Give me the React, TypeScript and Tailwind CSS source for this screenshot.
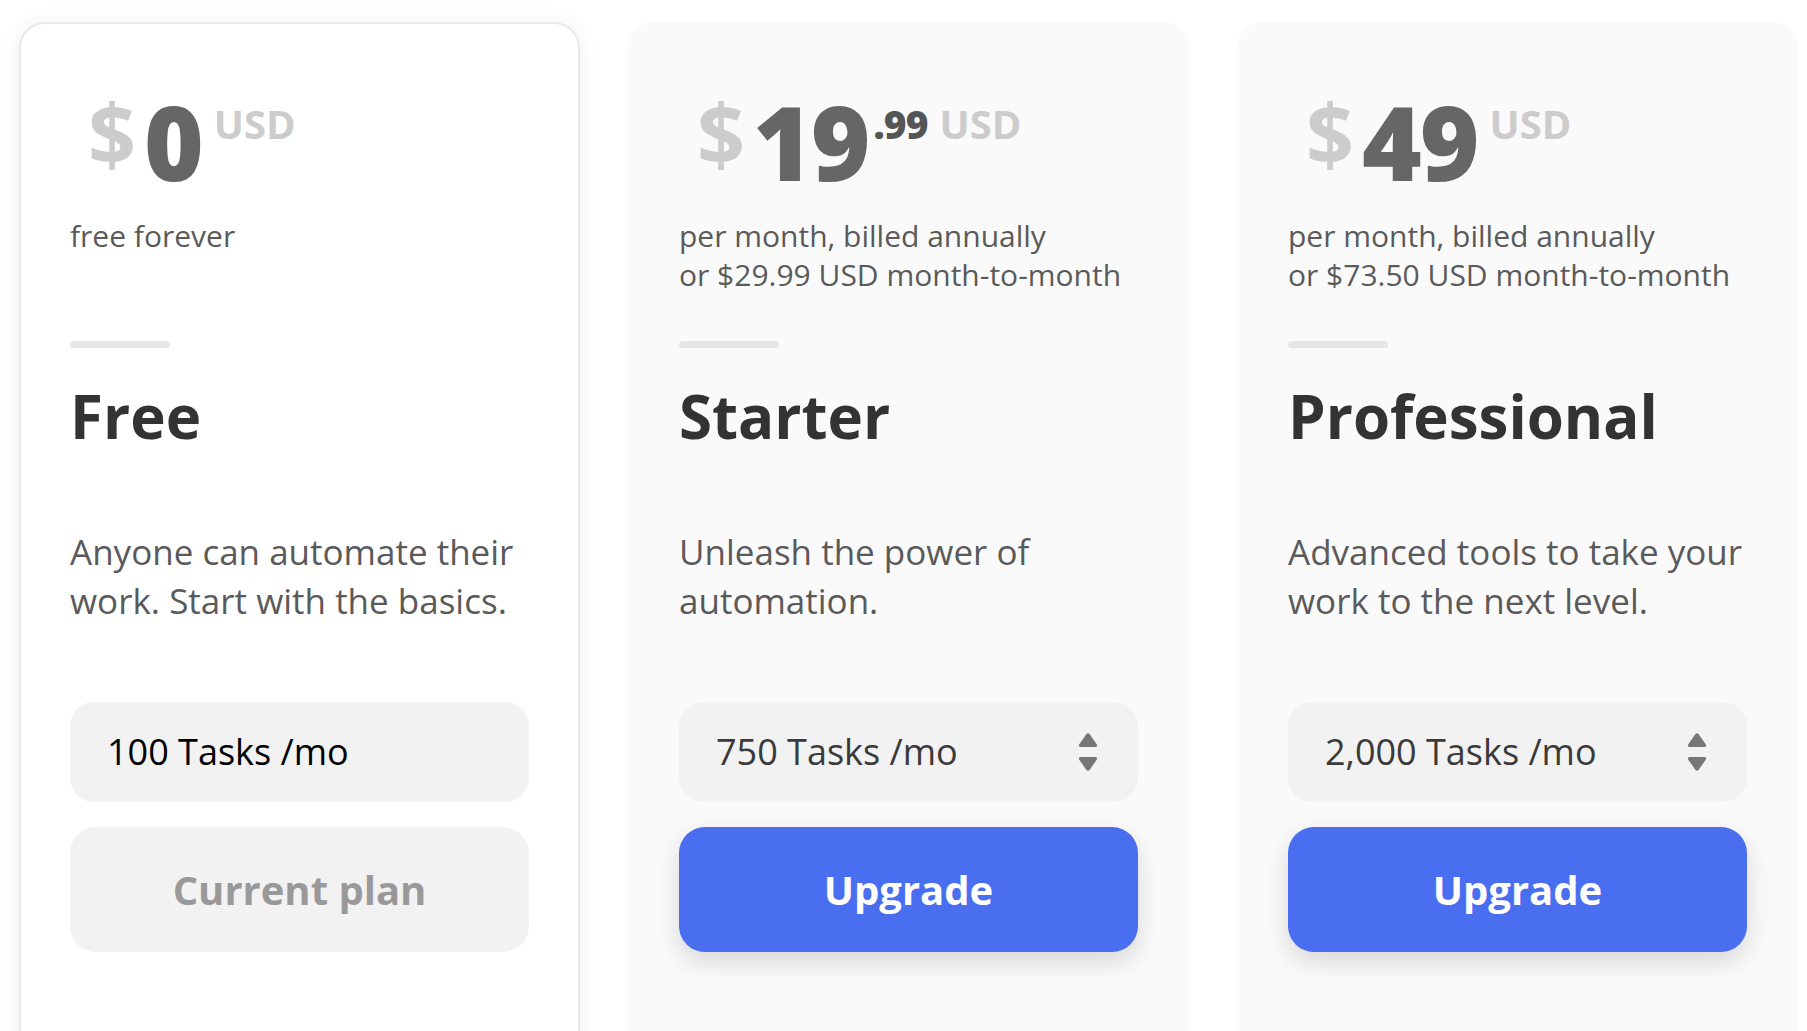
const font = { fontFamily: '"Open Sans", "Noto Sans", sans-serif' }

interface Plan {
  name: string
  price: string
  cents?: string
  subtitle: string[]
  description: string[]
  tasks: string
  current?: boolean
}

const PLANS: Plan[] = [
  {
    name: 'Free',
    price: '0',
    subtitle: ['free forever'],
    description: ['Anyone can automate their', 'work. Start with the basics.'],
    tasks: '100 Tasks /mo',
    current: true,
  },
  {
    name: 'Starter',
    price: '19',
    cents: '.99',
    subtitle: ['per month, billed annually', 'or $29.99 USD month-to-month'],
    description: ['Unleash the power of', 'automation.'],
    tasks: '750 Tasks /mo',
  },
  {
    name: 'Professional',
    price: '49',
    subtitle: ['per month, billed annually', 'or $73.50 USD month-to-month'],
    description: ['Advanced tools to take your', 'work to the next level.'],
    tasks: '2,000 Tasks /mo',
  },
]

function SortArrows() {
  return (
    <svg width="22" height="40" viewBox="0 0 22 40" className="shrink-0">
      <path
        d="M9.3 2.2a2 2 0 0 1 3.4 0l7.2 10.4A1.6 1.6 0 0 1 18.6 15H3.4a1.6 1.6 0 0 1-1.3-2.4z"
        fill="#777"
      />
      <path
        d="M9.3 37.8a2 2 0 0 0 3.4 0l7.2-10.4A1.6 1.6 0 0 0 18.6 25H3.4a1.6 1.6 0 0 0-1.3 2.4z"
        fill="#777"
      />
    </svg>
  )
}

function PlanCard({ plan }: { plan: Plan }) {
  return (
    <div
      className={`h-[1100px] rounded-[26px] border-2 px-[49px] pt-[67px] ${
        plan.current
          ? 'border-[#e9e9e9] bg-white shadow-[0_0_22px_rgba(0,0,0,0.06)]'
          : 'border-transparent bg-[#fafafa]'
      }`}
    >
      <div className="ml-[18px] flex items-start font-bold">
        <span className="text-[84px] leading-none text-[#cccccc]">$</span>
        <span className="ml-[8px] text-[102px] font-extrabold leading-none tracking-[-2px] text-[#666666]">
          {plan.price}
        </span>
        {plan.cents && (
          <span className="ml-[5px] mt-[13px] text-[39px] font-extrabold leading-none tracking-[-1px] text-[#555555]">
            {plan.cents}
          </span>
        )}
        <span className="ml-[12px] mt-[13px] text-[40px] leading-none text-[#cccccc]">USD</span>
      </div>

      <div className="mt-[23px] h-[78px] text-[30px] leading-[39px] text-[#5a5a5a]">
        {plan.subtitle.map((line) => (
          <div key={line}>{line}</div>
        ))}
      </div>

      <div className="mt-[47px] h-[7px] w-[100px] rounded-full bg-[#e6e6e6]" />

      <h2 className="mt-[38px] text-[60px] font-bold leading-none text-[#333333]">
        {plan.name}
      </h2>

      <div className="mt-[81px] h-[98px] text-[35px] leading-[49px] text-[#5a5a5a]">
        {plan.description.map((line) => (
          <div key={line}>{line}</div>
        ))}
      </div>

      <div className="mt-[77px] flex h-[100px] items-center justify-between rounded-[24px] bg-[#f2f2f2] pl-[37px] pr-[39px]">
        <span
          className={`text-[36px] font-medium ${plan.current ? 'text-black' : 'text-[#3a3a3a]'}`}
        >
          {plan.tasks}
        </span>
        {!plan.current && <SortArrows />}
      </div>

      {plan.current ? (
        <div className="mt-[25px] flex h-[125px] items-center justify-center rounded-[26px] bg-[#f2f2f2] text-[40px] font-bold text-[#999999]">
          Current plan
        </div>
      ) : (
        <button className="mt-[25px] flex h-[125px] w-full items-center justify-center rounded-[26px] bg-[#4a6ef0] text-[40px] font-bold text-white shadow-[0_10px_26px_rgba(0,0,0,0.14)]">
          Upgrade
        </button>
      )}
    </div>
  )
}

export default function App() {
  return (
    <div className="h-[1031px] overflow-hidden bg-white" style={font}>
      <div className="grid grid-cols-[561px_561px_561px] gap-[48px] pl-[19px] pt-[22px]">
        {PLANS.map((plan) => (
          <PlanCard key={plan.name} plan={plan} />
        ))}
      </div>
    </div>
  )
}
